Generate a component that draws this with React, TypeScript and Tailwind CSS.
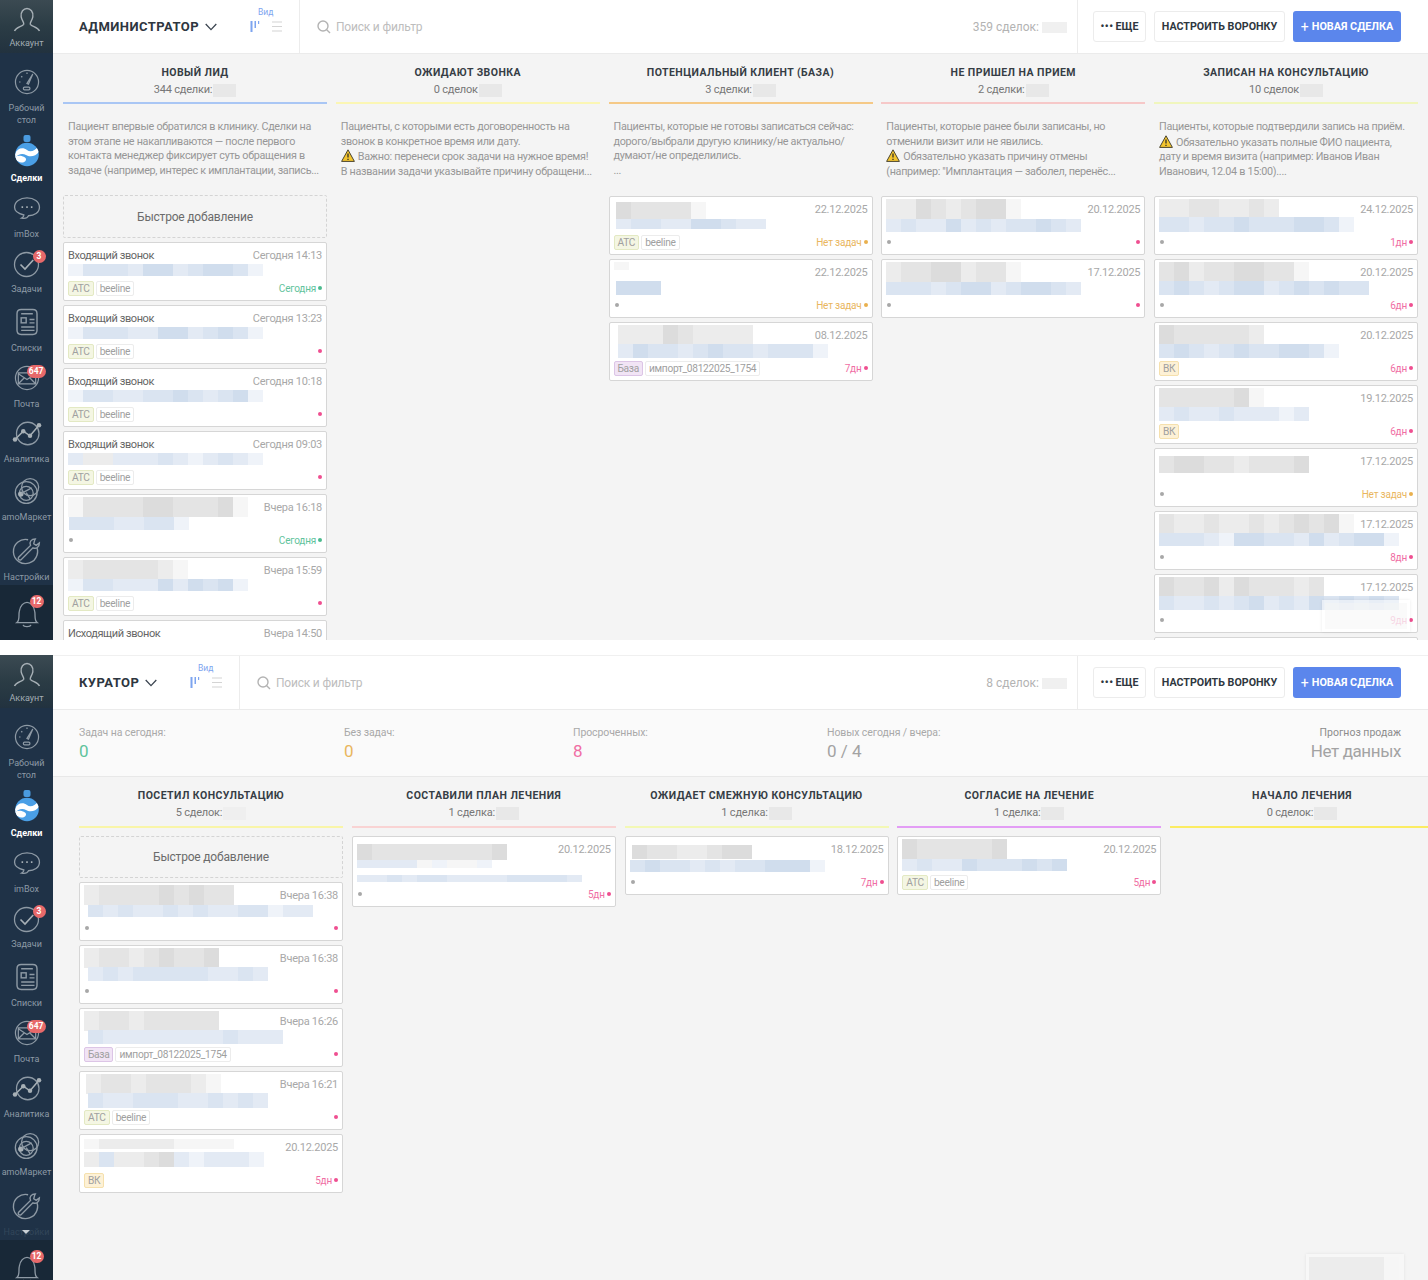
import type { ReactNode } from "react";

// mosaic cells stand in for the pixelated parts of the screenshot
const CELL: Record<string, string> = {
  a: "bg-[#eff3f9]",
  b: "bg-[#e3eaf4]",
  c: "bg-[#dae4f1]",
  d: "bg-[#d0dded]",
  p: "bg-[#f6f6f6]",
  q: "bg-[#ececec]",
  r: "bg-[#e4e4e4]",
  s: "bg-[#dcdcdc]",
  _: "bg-transparent",
};

function Mosaic(props: { cells: string; className?: string }) {
  return (
    <div className={`flex shrink-0 ${props.className ?? ""}`}>
      {props.cells.split("").map((c, i) => (
        <div key={i} className={`w-[15px] h-full ${CELL[c]}`} />
      ))}
    </div>
  );
}

function Warn() {
  return (
    <svg viewBox="0 0 14 13" className="inline-block w-[14px] h-[13px] mr-[3px] align-[-2px]">
      <path d="M7 .8 13.4 12.4H.6Z" fill="#f3c52f" stroke="#4a4430" strokeWidth="1" strokeLinejoin="round" />
      <path d="M7 4.6v4M7 9.8v1.2" stroke="#33302a" strokeWidth="1.3" />
    </svg>
  );
}

const S = { stroke: "#8e9aa5", strokeWidth: 1.7, fill: "none" };

function IconAccount() {
  return (
    <svg viewBox="0 0 36 36" className="w-[30px] h-[30px]" {...S}>
      <path d="M3 30c2-5 9-5 11-8 1-2-2-4-3-9-1-6 3-10 7-10s8 4 7 10c-1 5-4 7-3 9 2 3 9 3 11 8" stroke="#a7b0b6" />
    </svg>
  );
}
function IconDesk() {
  return (
    <svg viewBox="0 0 36 36" className="w-[26px] h-[26px]" {...S}>
      <circle cx="18" cy="18" r="16" />
      <path d="M18 20 26 7 20 21Z" />
      <rect x="13" y="25" width="9" height="4" rx="1.5" />
      <path d="M7 18h2M10 10l1.5 1.5M18 5v2" />
    </svg>
  );
}
function IconDeals() {
  return (
    <svg viewBox="0 0 24 32" className="w-[24px] h-[32px] -mt-[2px]">
      <defs>
        <clipPath id="deals-ball">
          <circle cx="12" cy="19.5" r="11.8" />
        </clipPath>
      </defs>
      <rect x="8.5" y="0" width="7" height="7" rx="2" fill="#4a9be0" />
      <circle cx="12" cy="19.5" r="11.8" fill="#4a9fe6" />
      <g clipPath="url(#deals-ball)" fill="#fff">
        <path d="M0 19C2 13 8 12 12 15 15 17.5 20 16 23 11.5L25 15C22 21.5 15 22.5 11 20 8 18 3 18.5 0 23Z" />
        <path d="M0 22C3 20 7 20.5 10 22.5 12.5 24.5 10 28 6 27.5 3 27 0 25 0 22Z" />
      </g>
    </svg>
  );
}
function IconImbox() {
  return (
    <svg viewBox="0 0 36 36" className="w-[28px] h-[28px]" {...S}>
      <path d="M18 5c9 0 16 5 16 12s-7 11-14 11c-1 2-4 4-9 3 2-1 3-2 3-4C6 25 2 22 2 17 2 10 9 5 18 5Z" />
      <path d="M11 17h2M17 17h2M23 17h2" strokeWidth="2.2" stroke="#a7b0b6" />
    </svg>
  );
}
function IconTasks() {
  return (
    <svg viewBox="0 0 36 36" className="w-[27px] h-[27px] mt-[3px]" {...S}>
      <circle cx="18" cy="18" r="16" />
      <path d="M10 18l6 6 11-12" strokeWidth="2.2" stroke="#a7b0b6" />
    </svg>
  );
}
function IconLists() {
  return (
    <svg viewBox="0 0 36 36" className="w-[30px] h-[30px]" {...S}>
      <path d="M6 8c0-3 2-5 5-5h14c3 0 5 2 5 5v20c0 3-2 5-5 5H11c-3 0-5-2-5-5Z" />
      <path d="M11 8h14M21 15h6M21 19h6M11 24h16M11 28h16" />
      <rect x="11" y="13" width="6" height="6" />
    </svg>
  );
}
function IconMail() {
  return (
    <svg viewBox="0 0 36 36" className="w-[26px] h-[26px]" {...S}>
      <circle cx="18" cy="18" r="16" />
      <path d="M6 11h24v15H6ZM6 12l12 8 12-8M6 26l8-8M30 26l-8-8" />
    </svg>
  );
}
function IconChart() {
  return (
    <svg viewBox="0 0 40 36" className="w-[34px] h-[27px] shrink-0" {...S}>
      <circle cx="21" cy="18" r="15" />
      <path d="M4 26 15 15l9 6L36 7" strokeWidth="2" stroke="#a7b0b6" />
      <circle cx="4" cy="26" r="3" fill="#a7b0b6" stroke="none" />
      <circle cx="15" cy="15" r="3" fill="#a7b0b6" stroke="none" />
      <circle cx="24" cy="21" r="3" fill="#a7b0b6" stroke="none" />
      <circle cx="36" cy="7" r="3" fill="#a7b0b6" stroke="none" />
    </svg>
  );
}
function IconMarket() {
  return (
    <svg viewBox="0 0 36 36" className="w-[28px] h-[30px]" {...S}>
      <circle cx="17" cy="20" r="14" />
      <circle cx="22" cy="13" r="11" />
      <circle cx="17" cy="21" r="9" />
      <circle cx="10" cy="22" r="3.5" fill="#a7b0b6" stroke="none" />
      <path d="M11 21 24 14M17 20l5 8" />
    </svg>
  );
}
function IconSettings() {
  return (
    <svg viewBox="0 0 36 36" className="w-[29px] h-[30px]" {...S}>
      <path d="M29 10a15 15 0 1 1-9-6" />
      <path d="M29 3c-5 0-8 4-6 8L8 26c-1 2 1 4 3 3l15-15c4 2 8-1 8-6l-4 3-3-2 1-4Z" fill="#1f3247" />
    </svg>
  );
}
function IconBell() {
  return (
    <svg viewBox="0 0 36 40" className="w-[28px] h-[32px] mx-auto mt-[5px]" {...S}>
      <path d="M5 31c4-3 2-8 3-14C9 9 14 5 18 5s9 4 10 12c1 6-1 11 3 14Z" />
      <path d="M13 34c1 3 9 3 10 0" />
    </svg>
  );
}

function Badge(props: { text: string; className: string }) {
  return (
    <span
      className={`absolute h-[13px] min-w-[13px] px-[2px] rounded-full bg-[#e7696a] text-white text-[8.5px] font-bold leading-[13px] text-center ${props.className}`}
    >
      {props.text}
    </span>
  );
}

function NavItem(props: {
  icon: ReactNode;
  label: ReactNode;
  className: string;
  active?: boolean;
  dim?: boolean;
  badge?: ReactNode;
}) {
  return (
    <div className={`flex flex-col items-center ${props.className}`}>
      <div className="relative w-[36px] h-[36px] flex items-center justify-center">
        {props.icon}
        {props.badge}
      </div>
      <div
        className={`relative mt-[2px] text-[9px] leading-[12px] text-center whitespace-nowrap ${
          props.active ? "text-white font-bold" : props.dim ? "text-[#32465a]" : "text-[#8d9aa6]"
        }`}
      >
        {props.label}
        {props.dim && (
          <span className="absolute left-1/2 -translate-x-1/2 top-[4px] w-0 h-0 border-x-[4px] border-x-transparent border-t-[4px] border-t-[#c9d0d6]" />
        )}
      </div>
    </div>
  );
}

function Sidebar(props: { dimSettings?: boolean }) {
  return (
    <div className="w-[53px] shrink-0 h-full bg-[#1f3247] flex flex-col overflow-hidden">
      <div className="h-[53px] shrink-0 flex flex-col items-center bg-gradient-to-b from-[#3b4a52] via-[#2b3c45] to-[#22323f]">
        <div className="mt-[5px] h-[32px] flex items-center overflow-hidden">
          <IconAccount />
        </div>
        <div className="text-[9px] leading-[12px] text-[#a3adb4]">Аккаунт</div>
      </div>
      <NavItem className="mt-[11px]" icon={<IconDesk />} label={<>Рабочий<br />стол</>} />
      <NavItem className="mt-[8px]" icon={<IconDeals />} label="Сделки" active />
      <NavItem className="mt-[6px]" icon={<IconImbox />} label="imBox" />
      <NavItem className="mt-[5px]" icon={<IconTasks />} label="Задачи" badge={<Badge text="3" className="top-[5px] right-[-1px]" />} />
      <NavItem className="mt-[9px]" icon={<IconLists />} label="Списки" />
      <NavItem className="mt-[6px]" icon={<IconMail />} label="Почта" badge={<Badge text="647" className="top-[5px] right-[-1px]" />} />
      <NavItem className="mt-[5px]" icon={<IconChart />} label="Аналитика" />
      <NavItem className="mt-[8px]" icon={<IconMarket />} label="amoМаркет" />
      <NavItem className="mt-[10px]" icon={<IconSettings />} label="Настройки" dim={props.dimSettings} />
      <div className="mt-[2px] h-[55px] shrink-0 bg-[#182837] flex justify-center pt-[8px]">
        <div className="relative w-[36px] h-[40px]">
          <IconBell />
          <Badge text="12" className="top-[2px] right-[1px]" />
        </div>
      </div>
    </div>
  );
}

function Header(props: { title: string; count: string; leftClass: string; second?: boolean }) {
  return (
    <div
      className={`shrink-0 bg-white border-b border-[#ebebeb] flex items-center ${
        props.second ? "h-[55px] border-t border-t-[#f0f0f0]" : "h-[54px]"
      }`}
    >
      <div className={`${props.leftClass} h-full pl-[26px] pr-[17px] flex items-center border-r border-[#ececec]`}>
        <span className="text-[13px] font-bold tracking-[0.45px] text-[#2e3640] whitespace-nowrap">{props.title}</span>
        <svg viewBox="0 0 12 8" className="w-[12px] h-[8px] ml-[6px]" fill="none" stroke="#3b4550" strokeWidth="1.3">
          <path d="M.7 1 6 6.6 11.3 1" />
        </svg>
        <div className="ml-auto relative w-[32px] h-[11px]">
          <span className="absolute left-[8px] top-[-14px] text-[8.5px] leading-[10px] text-[#7da4ef]">Вид</span>
          <svg viewBox="0 0 32 11" className="w-[32px] h-[11px]">
            <path d="M.5 0h2v11h-2ZM4.5 0h1.5v7H4.5ZM8 0h1.2v3H8Z" fill="#7da4ef" />
            <path d="M22 1h10M22 5.5h10M22 10h10" stroke="#d4d4d4" strokeWidth="1.2" />
          </svg>
        </div>
      </div>
      <div className="flex-1 min-w-0 h-full pl-[17px] pr-[10px] flex items-center">
        <svg viewBox="0 0 14 14" className="w-[14px] h-[14px] mr-[5px]" fill="none" stroke="#b3b3b3" strokeWidth="1.4">
          <circle cx="6" cy="6" r="5" />
          <path d="M9.7 9.7 13 13" />
        </svg>
        <span className="text-[12px] tracking-[-0.2px] text-[#bdbdbd]">Поиск и фильтр</span>
        <span className="ml-auto text-[12px] text-[#b3b3b3] whitespace-nowrap">{props.count}</span>
        <div className="ml-[3px] w-[25px] h-[11px] bg-[#f0f0f0] mt-[2px]" />
      </div>
      <div className="h-full border-l border-[#ececec] pl-[15px] pr-[27px] flex items-center gap-[8px]">
        <Btn className="w-[53px]">
          <span className="tracking-[0.5px] mr-[2px]">•••</span> ЕЩЕ
        </Btn>
        <Btn className="w-[131px]">НАСТРОИТЬ ВОРОНКУ</Btn>
        <div className="w-[108px] h-[31px] pt-[1px] rounded-[3px] bg-[#5b86ec] text-white text-[10.8px] font-bold flex items-center justify-center whitespace-nowrap">
          <span className="text-[14px] font-normal leading-none mr-[3px]">+</span>НОВАЯ СДЕЛКА
        </div>
      </div>
    </div>
  );
}

function Btn(props: { className: string; children: ReactNode }) {
  return (
    <div
      className={`${props.className} h-[31px] pt-[1px] rounded-[3px] border border-[#ececec] bg-white text-[#2f3740] text-[10.7px] font-bold flex items-center justify-center whitespace-nowrap`}
    >
      {props.children}
    </div>
  );
}

function ColumnHead(props: { title: string; sub: string; line: string; patch?: string; compact?: boolean }) {
  return (
    <div className={`shrink-0 border-b-2 ${props.line} ${props.compact ? "h-[40px]" : "h-[39px]"} text-center`}>
      <div className="text-[10.5px] font-bold tracking-[0.45px] leading-[16px] text-[#363d45] whitespace-nowrap">{props.title}</div>
      <div className="mt-[1px] flex justify-center items-center text-[11px] tracking-[-0.2px] leading-[16px] text-[#777]">
        {props.sub}
        <div className={`ml-[1px] w-[23px] h-[13px] ${props.patch ?? "bg-[#e8e8e8]"}`} />
      </div>
    </div>
  );
}

type Deal = {
  title?: string;
  date: string;
  grey?: string;
  greyClass?: string;
  mid?: string;
  blue?: string;
  blueClass?: string;
  tag?: "atc" | "baza" | "vk";
  tagText?: string;
  status?: string;
  tone: "pink" | "green" | "orange";
  tall?: boolean;
};

const TAGS = {
  atc: { label: "АТС", cls: "bg-[#f4f6e3] border-[#e3e9c3]" },
  baza: { label: "База", cls: "bg-[#f1e4f5] border-[#dcc5e6]" },
  vk: { label: "ВК", cls: "bg-[#fdf1d6] border-[#f5e0ad]" },
};
const TONE = {
  pink: { text: "text-[#f06ea4]", dot: "bg-[#ef4f90]" },
  green: { text: "text-[#5fc39c]", dot: "bg-[#4dbb8e]" },
  orange: { text: "text-[#e9b65e]", dot: "bg-[#e9b04e]" },
};

function Card(props: { deal: Deal }) {
  const d = props.deal;
  return (
    <div
      className={`${d.tall ? "h-[71px]" : "h-[59px]"} shrink-0 bg-white border border-[#d6d6d6] rounded-[2px] px-[4px] pt-[2px] flex flex-col`}
    >
      <div className="h-[20px] flex justify-between items-start shrink-0">
        {d.title ? (
          <span className="text-[11px] tracking-[-0.4px] leading-[22px] text-[#666] whitespace-nowrap">{d.title}</span>
        ) : d.grey ? (
          <Mosaic cells={d.grey} className={d.greyClass ?? "h-[20px]"} />
        ) : (
          <span />
        )}
        <span className="text-[11px] tracking-[-0.25px] leading-[22px] text-[#a8a8a8] whitespace-nowrap">{d.date}</span>
      </div>
      {d.mid && <Mosaic cells={d.mid} className="h-[8px] mt-[1px]" />}
      {d.blue && <Mosaic cells={d.blue} className={d.blueClass ?? "h-[12px] -mt-px"} />}
      <div className="mt-auto mb-[4px] h-[16px] flex items-center justify-between shrink-0">
        {d.tag ? (
          <div className="flex gap-[2px] text-[10.2px] tracking-[-0.3px] leading-[13px] text-[#a0a0a0]">
            <span className={`px-[3px] border rounded-[2px] ${TAGS[d.tag].cls}`}>{TAGS[d.tag].label}</span>
            {d.tagText && <span className="px-[3px] border border-[#ececec] rounded-[2px] bg-white">{d.tagText}</span>}
          </div>
        ) : (
          <span className="ml-[1px] w-[4px] h-[4px] rounded-full bg-[#a8a8a8]" />
        )}
        <div className={`flex items-center gap-[2px] text-[10px] tracking-[-0.2px] ${TONE[d.tone].text}`}>
          {d.status}
          <span className={`w-[4px] h-[4px] rounded-full ${TONE[d.tone].dot}`} />
        </div>
      </div>
    </div>
  );
}

function QuickAdd(props: { className: string }) {
  return (
    <div
      className={`${props.className} shrink-0 border border-dashed border-[#d4d4d4] rounded-[2px] flex items-center justify-center text-[12px] tracking-[-0.2px] text-[#6b6b6b]`}
    >
      Быстрое добавление
    </div>
  );
}

function Description(props: { lines: ReactNode[]; className?: string }) {
  return (
    <div
      className={`px-[5px] pt-[16px] shrink-0 text-[10.8px] tracking-[-0.3px] leading-[14.5px] text-[#979797] whitespace-nowrap ${props.className ?? "h-[92px]"}`}
    >
      {props.lines.map((l, i) => (
        <div key={i}>{l}</div>
      ))}
    </div>
  );
}

const atc = { tag: "atc" as const, tagText: "beeline" };
const call = (time: string) => ({ title: "Входящий звонок", date: `Сегодня ${time}`, ...atc });

const LEAD: Deal[] = [
  { ...call("14:13"), blue: "acccbddbcddca", status: "Сегодня", tone: "green" },
  { ...call("13:23"), blue: "acccbbddbcdca", tone: "pink" },
  { ...call("10:18"), blue: "accbbccdcbcda", tone: "pink" },
  { ...call("09:03"), blue: "bqqbbbcbabcba", tone: "pink" },
  { date: "Вчера 16:18", grey: "prrrrssrrrsp", blue: "cccbbcca", blueClass: "h-[13px] ml-[1px]", status: "Сегодня", tone: "green" },
  { date: "Вчера 15:59", grey: "qrrrrrqp", blue: "accbbbdbdcda", ...atc, tone: "pink" },
  { title: "Исходящий звонок", date: "Вчера 14:50", tone: "pink" },
];

const POTENTIAL: Deal[] = [
  { date: "22.12.2025", grey: "srrrrp", greyClass: "h-[17px] mt-[3px] ml-[2px]", blue: "bccbbddcbb", blueClass: "h-[10px] ml-[2px]", ...atc, status: "Нет задач", tone: "orange" },
  { date: "22.12.2025", grey: "p", greyClass: "h-[8px]", blue: "ddd", blueClass: "h-[14px] -mt-[1px] ml-[2px]", status: "Нет задач", tone: "orange" },
  { date: "08.12.2025", grey: "qqqsrqqqq", greyClass: "h-[20px] ml-[4px]", blue: "bdccbcdccbccca", blueClass: "h-[14px] -mt-[1px] ml-[4px]", tag: "baza", tagText: "импорт_08122025_1754", status: "7дн", tone: "pink" },
];

const NO_SHOW: Deal[] = [
  { date: "20.12.2025", grey: "qqsrqrssp", blue: "bcbbdbcbccdcb", blueClass: "h-[13px]", tone: "pink" },
  { date: "17.12.2025", grey: "qrrssqrrp", blue: "cccbcddbcddcb", blueClass: "h-[13px]", tone: "pink" },
];

const BOOKED: Deal[] = [
  { date: "24.12.2025", grey: "qqrrqqrq", blue: "ccbccdcccddca", blueClass: "h-[15px] -mt-[2px]", status: "1дн", tone: "pink" },
  { date: "20.12.2025", grey: "rsqrrssrrp", blue: "cdcbcddbcdcdcc", blueClass: "h-[14px] -mt-[1px]", status: "6дн", tone: "pink" },
  { date: "20.12.2025", grey: "srrrrrq", blue: "cdcbcdccddca", blueClass: "h-[14px] -mt-[1px]", tag: "vk", status: "6дн", tone: "pink" },
  { date: "19.12.2025", grey: "rrrrrsp", blue: "bcbbcbbbab", blueClass: "h-[14px] -mt-[1px]", tag: "vk", status: "6дн", tone: "pink" },
  { date: "17.12.2025", grey: "rssrrqrrrs", greyClass: "h-[17px] mt-[5px]", status: "Нет задач", tone: "orange" },
  { date: "17.12.2025", grey: "rqqrqqrqrsrsp", blue: "cccbaddccbdbcdda", blueClass: "h-[13px] -mt-[1px]", status: "8дн", tone: "pink" },
  { date: "17.12.2025", grey: "srrsqsrrrqr", blue: "cbbcbcdbcbdcdcdc", blueClass: "h-[14px] -mt-[1px]", status: "9дн", tone: "pink" },
  { date: "", tone: "pink" },
];

const VISITED: Deal[] = [
  { date: "Вчера 16:38", grey: "qrrrrsrsrr", blue: "cbcbbcbcbbccabb", blueClass: "h-[12px] ml-[4px]", tone: "pink" },
  { date: "Вчера 16:38", grey: "qrrqrsrrs", blue: "bcbcccccbbcb", blueClass: "h-[14px] -mt-[1px] ml-[4px]", tone: "pink" },
  { date: "Вчера 16:26", grey: "qrrqrrrrr", blue: "cbbbbbbbbcbbb", blueClass: "h-[14px] -mt-[1px] ml-[4px]", tag: "baza", tagText: "импорт_08122025_1754", tone: "pink" },
  { date: "Вчера 16:21", grey: "qrrqrrrqp", greyClass: "h-[20px] ml-[2px]", blue: "cbbcccbbcbcb", blueClass: "h-[15px] -mt-[1px] ml-[4px]", ...atc, tone: "pink" },
  { date: "20.12.2025", grey: "pqqqqqpppp", greyClass: "h-[10px] mt-[2px]", blue: "qcqqrsbabbba", blueClass: "h-[15px] -mt-[5px]", tag: "vk", status: "5дн", tone: "pink" },
];

const PLAN: Deal = {
  date: "20.12.2025",
  grey: "srrrrrrrrs",
  greyClass: "h-[16px] mt-[5px]",
  mid: "bbbbpappa",
  blue: "bbcbccbbbbccccb",
  blueClass: "h-[7px] mt-[7px]",
  status: "5дн",
  tone: "pink",
  tall: true,
};
const ADJACENT: Deal = { date: "18.12.2025", grey: "srrqqrss", greyClass: "h-[14px] mt-[6px] ml-[2px]", blue: "cdccbcbccddda", blueClass: "h-[12px] mt-[1px]", status: "7дн", tone: "pink" };
const CONSENT: Deal = { date: "20.12.2025", grey: "srrrrrs", blue: "bcbbdcccdcd", blueClass: "h-[12px]", ...atc, status: "5дн", tone: "pink" };

function Column(props: { head: ReactNode; desc?: ReactNode; cards: Deal[]; quick?: string; cardsClass?: string }) {
  return (
    <div className="w-[264px] shrink-0 flex flex-col">
      {props.head}
      {props.desc}
      <div className={`flex flex-col gap-[4px] ${props.cardsClass ?? ""}`}>
        {props.quick && <QuickAdd className={props.quick} />}
        {props.cards.map((d, i) => (
          <Card key={i} deal={d} />
        ))}
      </div>
    </div>
  );
}

function FirstBoard() {
  return (
    <div className="relative h-[640px] flex overflow-hidden bg-[#f4f4f4]">
      <Sidebar />
      <div className="flex-1 min-w-0 flex flex-col">
        <Header title="АДМИНИСТРАТОР" count="359 сделок:" leftClass="w-[247px]" />
        <div className="pl-[10px] pt-[11px] flex gap-[8.75px] overflow-hidden">
          <Column
            head={<ColumnHead title="НОВЫЙ ЛИД" sub="344 сделки:" line="border-[#a9c6f4]" />}
            desc={
              <Description
                className="h-[91px]"
                lines={[
                  "Пациент впервые обратился в клинику. Сделки на",
                  "этом этапе не накапливаются — после первого",
                  "контакта менеджер фиксирует суть обращения в",
                  "задаче (например, интерес к имплантации, запись...",
                ]}
              />
            }
            quick="h-[43px]"
            cards={LEAD}
          />
          <Column
            head={<ColumnHead title="ОЖИДАЮТ ЗВОНКА" sub="0 сделок" line="border-[#fbf6b4]" />}
            desc={
              <Description
                lines={[
                  "Пациенты, с которыми есть договоренность на",
                  "звонок в конкретное время или дату.",
                  <><Warn />Важно: перенеси срок задачи на нужное время!</>,
                  "В названии задачи указывайте причину обращени...",
                ]}
              />
            }
            cards={[]}
          />
          <Column
            head={<ColumnHead title="ПОТЕНЦИАЛЬНЫЙ КЛИЕНТ (БАЗА)" sub="3 сделки:" line="border-[#f5c987]" />}
            desc={
              <Description
                lines={[
                  "Пациенты, которые не готовы записаться сейчас:",
                  "дорого/выбрали другую клинику/не актуально/",
                  "думают/не определились.",
                  "...",
                ]}
              />
            }
            cards={POTENTIAL}
          />
          <Column
            head={<ColumnHead title="НЕ ПРИШЕЛ НА ПРИЕМ" sub="2 сделки:" line="border-[#f6c8c8]" />}
            desc={
              <Description
                lines={[
                  "Пациенты, которые ранее были записаны, но",
                  "отменили визит или не явились.",
                  <><Warn />Обязательно указать причину отмены</>,
                  "(например: \"Имплантация — заболел, перенёс...",
                ]}
              />
            }
            cards={NO_SHOW}
          />
          <Column
            head={<ColumnHead title="ЗАПИСАН НА КОНСУЛЬТАЦИЮ" sub="10 сделок" line="border-[#f0f6bd]" />}
            desc={
              <Description
                lines={[
                  "Пациенты, которые подтвердили запись на приём.",
                  <><Warn />Обязательно указать полные ФИО пациента,</>,
                  "дату и время визита (например: Иванов Иван",
                  "Иванович, 12.04 в 15:00)....",
                ]}
              />
            }
            cards={BOOKED}
          />
        </div>
      </div>
      <div className="absolute left-[1322px] top-[600px] w-[88px] h-[32px] bg-white/50 shadow-[0_0_3px_rgba(0,0,0,0.08)] p-[3px]">
        <Mosaic cells="pppppp" className="h-full opacity-50" />
      </div>
    </div>
  );
}

function Stat(props: { label: string; value: string; tone: string; className: string }) {
  return (
    <div className={props.className}>
      <div className="text-[10.5px] tracking-[-0.1px] leading-[14px] text-[#a9a9a9] whitespace-nowrap">{props.label}</div>
      <div className={`text-[17px] leading-[23px] ${props.tone}`}>{props.value}</div>
    </div>
  );
}

function SecondBoard() {
  return (
    <div className="relative h-[625px] flex overflow-hidden bg-[#f4f4f4]">
      <Sidebar dimSettings />
      <div className="flex-1 min-w-0 flex flex-col">
        <Header second title="КУРАТОР" count="8 сделок:" leftClass="w-[187px]" />
        <div className="h-[67px] shrink-0 bg-[#fafafa] border-b border-[#e8e8e8] pl-[26px] pr-[27px] pt-[16px] flex">
          <Stat className="w-[265px]" label="Задач на сегодня:" value="0" tone="text-[#5fc39c]" />
          <Stat className="w-[229px]" label="Без задач:" value="0" tone="text-[#e9b65e]" />
          <Stat className="w-[254px]" label="Просроченных:" value="8" tone="text-[#f06ea4]" />
          <Stat className="flex-1" label="Новых сегодня / вчера:" value="0 / 4" tone="text-[#a3a3a3]" />
          <div className="text-right">
            <div className="text-[10.5px] leading-[14px] text-[#8c8c8c]">Прогноз продаж</div>
            <div className="text-[17px] tracking-[-0.4px] leading-[23px] text-[#a3a3a3]">Нет данных</div>
          </div>
        </div>
        <div className="pl-[26px] pt-[11px] flex gap-[8.75px] overflow-hidden">
          <Column
            head={<ColumnHead compact title="ПОСЕТИЛ КОНСУЛЬТАЦИЮ" sub="5 сделок:" line="border-[#f9f5a8]" patch="bg-[#efefef]" />}
            quick="h-[42px]"
            cards={VISITED}
            cardsClass="mt-[8px]"
          />
          <Column
            head={<ColumnHead compact title="СОСТАВИЛИ ПЛАН ЛЕЧЕНИЯ" sub="1 сделка:" line="border-[#f9d3d3]" />}
            cards={[PLAN]}
            cardsClass="mt-[8px]"
          />
          <Column
            head={<ColumnHead compact title="ОЖИДАЕТ СМЕЖНУЮ КОНСУЛЬТАЦИЮ" sub="1 сделка:" line="border-[#f3f8b5]" />}
            cards={[ADJACENT]}
            cardsClass="mt-[8px]"
          />
          <Column
            head={<ColumnHead compact title="СОГЛАСИЕ НА ЛЕЧЕНИЕ" sub="1 сделка:" line="border-[#e39df5]" />}
            cards={[CONSENT]}
            cardsClass="mt-[8px]"
          />
          <Column
            head={<ColumnHead compact title="НАЧАЛО ЛЕЧЕНИЯ" sub="0 сделок:" line="border-[#fbec62]" />}
            cards={[]}
          />
        </div>
      </div>
      <div className="absolute left-[1306px] top-[599px] w-[98px] h-[40px] bg-[#f7f7f7] shadow-[0_0_3px_rgba(0,0,0,0.08)] p-[3px]">
        <Mosaic cells="qqqqqp" className="h-full" />
      </div>
    </div>
  );
}

export default function App() {
  return (
    <div className="w-[1428px] h-[1280px] overflow-hidden bg-white font-[family-name:Roboto,sans-serif]">
      <FirstBoard />
      <div className="h-[15px] bg-white" />
      <SecondBoard />
    </div>
  );
}
